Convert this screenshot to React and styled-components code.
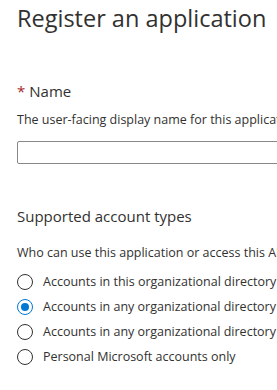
import React from 'react';
import styled, { createGlobalStyle } from 'styled-components';

const Global = createGlobalStyle`
	html, body {
		margin: 0;
		padding: 0;
		background: #fff;
		overflow: hidden;
	}
	body {
		font-family: "Open Sans", "Noto Sans", sans-serif;
		color: #323130;
	}
`;

const Page = styled.div`
	padding: 2px 0 0 17px;
	width: 420px;
`;

const Title = styled.h1`
	margin: 0;
	font-size: 23.5px;
	font-weight: 400;
	line-height: 32px;
	white-space: nowrap;
`;

const Section = styled.section`
	margin-top: ${props => props.top}px;
`;

const Label = styled.div`
	font-size: 15px;
	line-height: 20px;
	white-space: nowrap;
`;

const Star = styled.span`
	color: #a4262c;
	margin-right: 4px;
`;

const Help = styled.p`
	margin: ${props => props.gap}px 0 0;
	font-size: 12.5px;
	line-height: 18px;
	white-space: nowrap;
`;

// text field runs on past the right edge of the frame
const TextField = styled.div`
	box-sizing: border-box;
	width: 400px;
	height: 23px;
	margin-top: 12px;
	border: 1px solid #8a8886;
	border-radius: 2px;
`;

const Options = styled.div`
	display: flex;
	flex-direction: column;
	gap: 8px;
	margin-top: 11px;
`;

const Option = styled.label`
	display: flex;
	align-items: center;
	gap: 10px;
	font-size: 12.5px;
	line-height: 17px;
	white-space: nowrap;
`;

const Circle = styled.span`
	flex: none;
	box-sizing: border-box;
	width: 16px;
	height: 16px;
	border-radius: 50%;
	border: 1px solid ${props => (props.checked ? '#0078d4' : '#323130')};
	display: flex;
	align-items: center;
	justify-content: center;
	&::after {
		content: '';
		display: ${props => (props.checked ? 'block' : 'none')};
		width: 8px;
		height: 8px;
		border-radius: 50%;
		background: #0078d4;
	}
`;

const accountTypes = [
	{ id: 'single', label: 'Accounts in this organizational directory only (Default Directory only - Single tenant)' },
	{ id: 'multi', label: 'Accounts in any organizational directory (Any Azure AD directory - Multitenant)', checked: true },
	{ id: 'multi-personal', label: 'Accounts in any organizational directory (Any Azure AD directory - Multitenant) and personal Microsoft accounts (e.g. Skype, Xbox)' },
	{ id: 'personal', label: 'Personal Microsoft accounts only' },
];

const App = () => {
	return (
		<Page>
			<Global />
			<Title>Register an application</Title>

			<Section top={47}>
				<Label>
					<Star>*</Star>Name
				</Label>
				<Help gap={10}>The user-facing display name for this application (this can be changed later).</Help>
				<TextField role="textbox" aria-label="Name" />
			</Section>

			<Section top={42}>
				<Label>Supported account types</Label>
				<Help gap={18}>Who can use this application or access this API?</Help>
				<Options>
					{accountTypes.map(type =>
						<Option key={type.id}>
							<Circle checked={type.checked} />
							{type.label}
						</Option>
					)}
				</Options>
			</Section>
		</Page>
	);
};

export default App;
